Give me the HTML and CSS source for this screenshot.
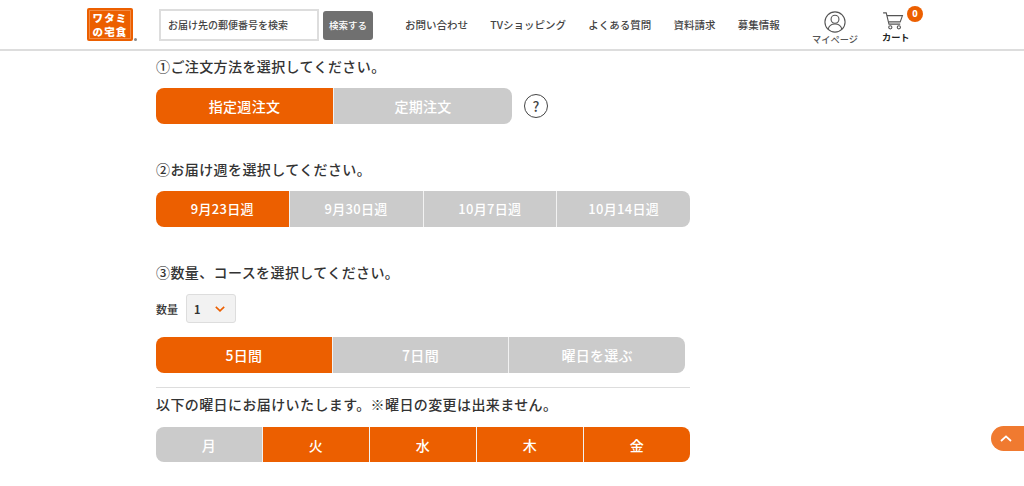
FILE: index.html
```html
<!DOCTYPE html>
<html lang="ja">
<head>
    <meta charset="UTF-8">
    <meta name="viewport" content="width=device-width, initial-scale=1.0">
    <title>ワタミの宅食</title>
    <link rel="stylesheet" href="styles.css">
</head>
<body>

<!-- ヘッダー -->
<header class="header">
    <div class="logo">
        <div class="logo-box">
            <div class="logo-inner">ワタミ<br>の宅食</div>
        </div>
        <span class="logo-mark"></span>
    </div>
    <form class="search">
        <div class="search-input">お届け先の郵便番号を検索</div>
        <div class="search-btn">検索する</div>
    </form>
    <nav class="nav">
        <a>お問い合わせ</a>
        <a>TVショッピング</a>
        <a>よくある質問</a>
        <a>資料請求</a>
        <a>募集情報</a>
    </nav>
    <div class="mypage">
        <svg width="22" height="22" viewBox="0 0 24 24" fill="none" stroke="#555" stroke-width="1.200">
            <circle cx="12" cy="12" r="11"/>
            <circle cx="12" cy="9" r="4.300"/>
            <path d="M4.500 20c.8-3.800 3.600-5.800 7.500-5.800s6.700 2 7.500 5.800"/>
        </svg>
        <span>マイページ</span>
    </div>
    <div class="cart">
        <svg width="22" height="18" viewBox="0 0 24 20" fill="none" stroke="#555" stroke-width="1.200">
            <path d="M1 1h3.500l3 12.500h12.500"/>
            <path d="M5.200 4h17.300l-2.500 7h-12.800"/>
            <circle cx="9" cy="17" r="1.800"/>
            <circle cx="18.500" cy="17" r="1.800"/>
        </svg>
        <span>カート</span>
        <b class="cart-count">0</b>
    </div>
</header>

<div class="container">
    <!-- 注文方法 -->
    <h2 class="title">①ご注文方法を選択してください。</h2>
    <div class="method-row">
        <div class="tabs tabs-method">
            <div class="tab on">指定週注文</div>
            <div class="tab">定期注文</div>
        </div>
        <div class="help">?</div>
    </div>

    <!-- お届け週 -->
    <h2 class="title title-next">②お届け週を選択してください。</h2>
    <div class="tabs tabs-week">
        <div class="tab on">9月23日週</div>
        <div class="tab">9月30日週</div>
        <div class="tab">10月7日週</div>
        <div class="tab">10月14日週</div>
    </div>

    <!-- 数量、コース -->
    <h2 class="title title-next">③数量、コースを選択してください。</h2>
    <div class="qty-row">
        <span class="qty-label">数量</span>
        <div class="qty-select">
            <span>1</span>
            <svg width="10" height="6" viewBox="0 0 10 6" fill="none" stroke="#ec5f00" stroke-width="1.600">
                <path d="M0.800 0.800l4.200 4 4.200-4"/>
            </svg>
        </div>
    </div>
    <div class="tabs tabs-course">
        <div class="tab on">5日間</div>
        <div class="tab">7日間</div>
        <div class="tab">曜日を選ぶ</div>
    </div>

    <hr class="line">
    <p class="note">以下の曜日にお届けいたします。※曜日の変更は出来ません。</p>
    <div class="tabs tabs-day">
        <div class="tab">月</div>
        <div class="tab on">火</div>
        <div class="tab on">水</div>
        <div class="tab on">木</div>
        <div class="tab on">金</div>
    </div>
</div>

<!-- ページトップ -->
<div class="pagetop">
    <svg width="12" height="7" viewBox="0 0 12 7" fill="none" stroke="#fff" stroke-width="1.800">
        <path d="M1 6l5-4.600 5 4.600"/>
    </svg>
</div>

</body>
</html>
```

FILE: styles.css
```css
* {
    box-sizing: border-box;
}
body {
    font-family: "Noto Sans CJK JP", "Noto Sans", sans-serif;
    background-color: white;
    color: #333;
    height: 486px;
    margin: 0;
    overflow: hidden;
}
.header {
    display: flex;
    align-items: flex-start;
    height: 51px;
    padding-left: 87px;
    border-bottom: 2px solid #ddd;
}
.logo {
    display: flex;
    align-items: flex-end;
    margin-top: 8px;
}
.logo-box {
    width: 46px;
    height: 33px;
    padding: 2px;
    border-radius: 2px;
    background-color: #ec5f00;
}
.logo-inner {
    height: 29px;
    border: 1px solid #f28a44;
    color: white;
    font-size: 10.500px;
    font-weight: 900;
    line-height: 13.500px;
    text-align: center;
    letter-spacing: 1.200px;
    white-space: nowrap;
}
.logo-mark {
    width: 3px;
    height: 3px;
    margin-left: 1px;
    border-radius: 50%;
    background-color: #888;
}
.search {
    display: flex;
    align-items: center;
    margin: 9px 0 0 22px;
}
.search-input {
    width: 160px;
    height: 32px;
    padding-left: 7px;
    border: 2px solid #ddd;
    color: #444;
    font-size: 10px;
    font-weight: 500;
    line-height: 28px;
}
.search-btn {
    width: 50px;
    height: 29px;
    margin-left: 4px;
    border-radius: 3px;
    background-color: #707070;
    color: white;
    font-size: 9.500px;
    font-weight: 500;
    line-height: 29px;
    text-align: center;
}
.nav {
    display: flex;
    gap: 22.300px;
    width: 376px;
    margin: 17px 0 0 32px;
    color: #444;
    font-size: 10.500px;
    font-weight: 500;
    line-height: 16px;
    white-space: nowrap;
}
.mypage, .cart {
    position: relative;
    display: flex;
    flex-direction: column;
    font-size: 9.200px;
    font-weight: 500;
    line-height: 12px;
    white-space: nowrap;
}
.mypage {
    align-items: center;
    width: 46px;
    margin: 11px 0 0 31px;
    color: #555;
}
.cart {
    align-items: flex-start;
    width: 28px;
    margin: 12px 0 0 24px;
    color: #222;
    font-weight: 700;
}
.cart span {
    margin-top: 1px;
}
.cart-count {
    position: absolute;
    top: -6px;
    left: 25px;
    width: 16px;
    height: 16px;
    border-radius: 50%;
    background-color: #ec5f00;
    color: white;
    font-size: 9px;
    line-height: 16px;
    text-align: center;
}
.container {
    width: 534px;
    margin-left: 156px;
}
.title {
    margin: 0;
    font-size: 14px;
    font-weight: 500;
    line-height: 20px;
    letter-spacing: 0.400px;
    color: #333;
}
.title:first-child {
    margin-top: 5px;
}
.title-next {
    margin-top: 35px;
}
.method-row {
    display: flex;
    align-items: center;
    margin-top: 12px;
}
.tabs {
    display: flex;
    height: 36px;
    margin-top: 12px;
    border-radius: 8px;
    overflow: hidden;
}
.method-row .tabs {
    margin-top: 0;
}
.tab {
    flex: 1;
    background-color: #cbcbcb;
    color: white;
    font-size: 14px;
    font-weight: 500;
    line-height: 36px;
    text-align: center;
    letter-spacing: 0.300px;
}
.tab + .tab {
    border-left: 1px solid #f2f2f2;
}
.tab.on {
    background-color: #ec5f00;
}
.tabs-method {
    width: 356px;
}
.tabs-method .tab:first-child {
    flex: none;
    width: 177px;
}
.tabs-week .tab {
    font-size: 13px;
}
.tabs-course {
    width: 529px;
    margin-top: 14px;
}
.tabs-day {
    height: 35px;
    margin-top: 13px;
}
.help {
    width: 24px;
    height: 24px;
    margin-left: 12px;
    border: 1px solid #444;
    border-radius: 50%;
    color: #444;
    font-size: 14px;
    font-weight: 500;
    line-height: 22px;
    text-align: center;
}
.qty-row {
    display: flex;
    align-items: center;
    margin-top: 12px;
}
.qty-label {
    width: 30px;
    font-size: 11px;
    font-weight: 500;
}
.qty-select {
    display: flex;
    align-items: center;
    justify-content: space-between;
    width: 50px;
    height: 29px;
    padding: 0 10px 0 7px;
    border: 1px solid #ddd;
    border-radius: 3px;
    background-color: #f2f2f2;
    font-size: 11px;
    font-weight: 700;
}
.line {
    height: 1px;
    margin: 14px 0 0;
    border: none;
    background-color: #ddd;
}
.note {
    margin: 6px 0 0;
    font-size: 14px;
    font-weight: 500;
    line-height: 20px;
    letter-spacing: 0.400px;
}
.pagetop {
    position: fixed;
    top: 426px;
    right: 0;
    display: flex;
    align-items: center;
    justify-content: center;
    width: 33px;
    height: 25px;
    padding-right: 3px;
    border-radius: 13px 0 0 13px;
    background-color: #f07a30;
}
```
